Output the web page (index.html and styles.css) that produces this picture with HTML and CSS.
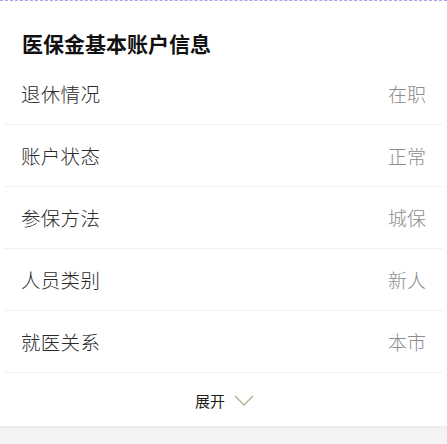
FILE: index.html
```html
<!DOCTYPE html>
<html lang="zh">
<head>
<meta charset="utf-8">
<link rel="stylesheet" href="styles.css">
</head>
<body>
<div class="card">
  <h1 class="title">医保金基本账户信息</h1>
  <div class="rows">
    <div class="row"><span class="label">退休情况</span><span class="value">在职</span></div>
    <div class="row"><span class="label">账户状态</span><span class="value">正常</span></div>
    <div class="row"><span class="label">参保方法</span><span class="value">城保</span></div>
    <div class="row"><span class="label">人员类别</span><span class="value">新人</span></div>
    <div class="row"><span class="label">就医关系</span><span class="value">本市</span></div>
  </div>
  <div class="expand">
    <span class="expand-text">展开</span>
    <svg class="chev" width="20" height="11" viewBox="0 0 20 11"><path d="M1 1 L10 10 L19 1" fill="none" stroke="#bdb79a" stroke-width="1.6"/></svg>
  </div>
</div>
<div class="footer"></div>
</body>
</html>
```

FILE: styles.css
```css
html, body {
  margin: 0;
  padding: 0;
  background: #fff;
  font-family: "Noto Sans CJK SC", "Noto Sans", sans-serif;
}
body {
  width: 447px;
  height: 444px;
  overflow: hidden;
  display: flex;
  flex-direction: column;
}
.card {
  border-top: 1px dashed #a99ff0;
  height: 426px;
  box-sizing: border-box;
  display: flex;
  flex-direction: column;
}
.title {
  margin: 0;
  padding: 28px 0 0 22px;
  height: 34px;
  font-size: 21px;
  font-weight: bold;
  line-height: 28px;
  letter-spacing: 0;
  color: #111;
}
.rows {
  display: flex;
  flex-direction: column;
  margin-left: 4px;
  margin-right: 4px;
}
.row {
  height: 61px;
  border-bottom: 1px solid #f1f1f1;
  display: flex;
  align-items: center;
  justify-content: space-between;
  padding: 0 17px 0 17px;
}
.label {
  font-size: 19.5px;
  font-weight: 300;
  color: #2a2a2a;
  letter-spacing: 0.3px;
}
.value {
  font-size: 19px;
  font-weight: 300;
  color: #8c8c8c;
}
.expand {
  flex: 1;
  display: flex;
  align-items: center;
  justify-content: center;
  gap: 9px;
  padding-left: 2px;
  padding-top: 2px;
}
.expand-text {
  font-size: 15px;
  font-weight: 400;
  color: #1a1a1a;
}
.chev {
  display: block;
}
.footer {
  flex: 1;
  background: #f4f4f4;
  box-shadow: inset 0 2px 3px rgba(0,0,0,0.04);
}
```
